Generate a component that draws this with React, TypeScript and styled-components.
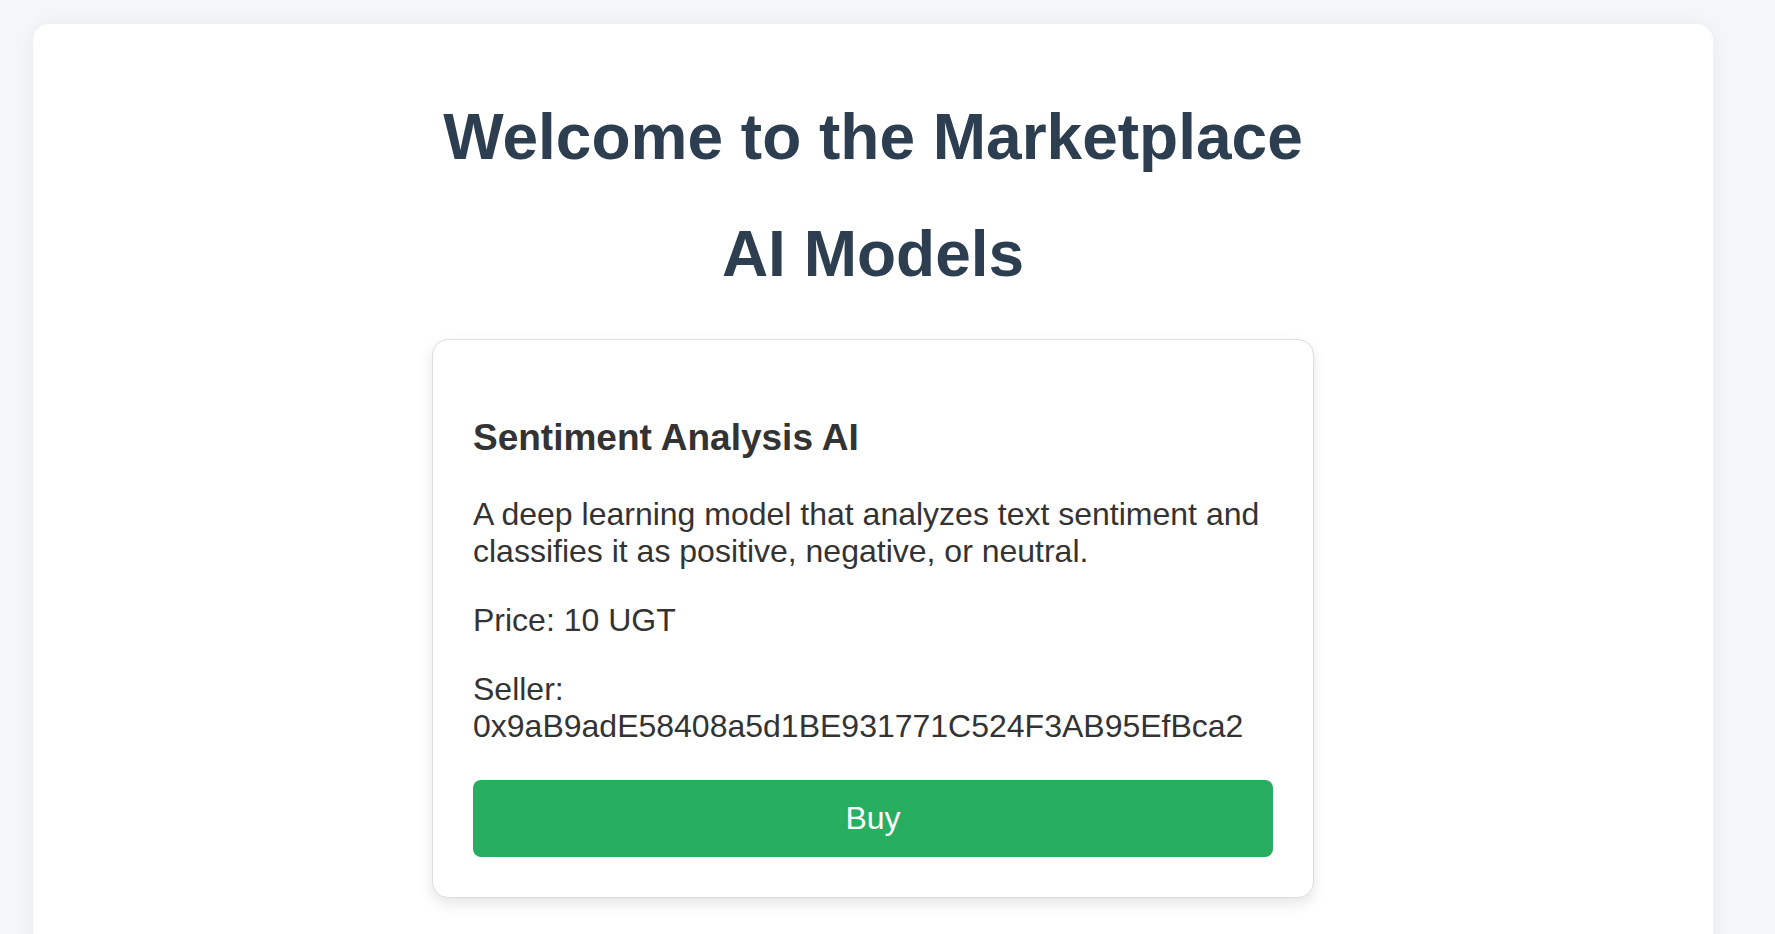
import styled, { createGlobalStyle } from "styled-components";

type Model = {
  id: string
  name: string
  description: string
  price: number
  seller: string
};

const models: Model[] = [
  {
    id: '1',
    name: 'Sentiment Analysis AI',
    description:
      'A deep learning model that analyzes text sentiment and classifies it as positive, negative, or neutral.',
    price: 10,
    seller: '0x9aB9adE58408a5d1BE931771C524F3AB95EfBca2'
  }
];

const GlobalStyle = createGlobalStyle`
  html, body {
    margin: 0;
    padding: 0;
  }

  body {
    background: #f5f6f8;
    font-family: "Liberation Sans", Arial, sans-serif;
    color: #333;
  }
`;

const Page = styled.div`
  padding: 24px 0 0 33px;
`;

const Container = styled.main`
  box-sizing: border-box;
  width: 1680px;
  min-height: 960px;
  padding: 33px 40px 40px;
  background: #ffffff;
  border-radius: 16px;
  box-shadow: 0 2px 20px rgba(0, 0, 0, 0.06);
`;

const Heading = styled.h1`
  margin: 0.67em 0;
  font-size: 64px;
  font-weight: 700;
  line-height: normal;
  color: #2c3e50;
  text-align: center;
`;

const ModelList = styled.div`
  display: flex;
  flex-direction: column;
  align-items: center;
  gap: 30px;
  margin-top: 48px;
`;

const Card = styled.div`
  width: 800px;
  padding: 40px;
  background: #ffffff;
  border: 1px solid #ddd;
  border-radius: 16px;
  box-shadow: 0 6px 14px rgba(0, 0, 0, 0.1);
`;

const CardTitle = styled.h3`
  margin: 37px 0;
  font-size: 37px;
  font-weight: 700;
  line-height: normal;
  color: #333;
`;

const CardText = styled.p`
  margin: 32px 0;
  font-size: 32px;
  line-height: normal;
  color: #333;
  word-break: break-word;
`;

const BuyButton = styled.button`
  display: block;
  width: 100%;
  margin-top: 35px;
  padding: 20px;
  border: none;
  border-radius: 8px;
  background: #27ae60;
  color: #ffffff;
  font-family: "Liberation Sans", Arial, sans-serif;
  font-size: 32px;
  line-height: 37px;
  cursor: pointer;
`;

const ModelCard = ({ model }: { model: Model }) => {
  return (
    <Card>
      <CardTitle>{model.name}</CardTitle>
      <CardText>{model.description}</CardText>
      <CardText>Price: {model.price} UGT</CardText>
      {/* the address wraps onto its own line */}
      <CardText>Seller: {model.seller}</CardText>
      <BuyButton type="button">Buy</BuyButton>
    </Card>
  );
};

const App = () => {
  return (
    <Page>
      <GlobalStyle />
      <Container>
        <Heading>Welcome to the Marketplace</Heading>
        <Heading>AI Models</Heading>
        <ModelList>
          {models.map((model) => (
            <ModelCard key={model.id} model={model} />
          ))}
        </ModelList>
      </Container>
    </Page>
  );
};

export default App;
